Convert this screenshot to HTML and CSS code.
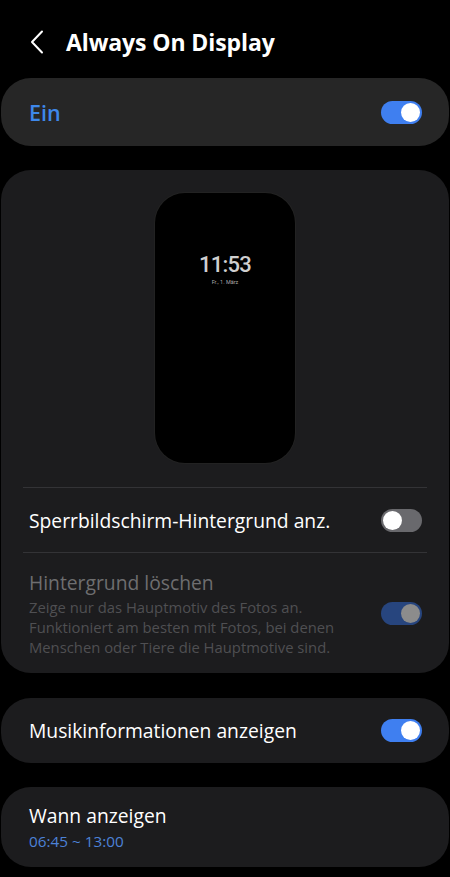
FILE: index.html
```html
<!DOCTYPE html>
<html lang="de">
<head>
<meta charset="utf-8">
<link rel="stylesheet" href="styles.css">
</head>
<body>
<div class="screen">
  <header class="header">
    <svg class="back" width="14" height="24" viewBox="0 0 14 24"><path d="M12 1.5 L2 12 L12 22.5" fill="none" stroke="#fff" stroke-width="2" stroke-linecap="round" stroke-linejoin="round"/></svg>
    <h1 class="title">Always On Display</h1>
  </header>

  <section class="card card-main">
    <span class="main-label">Ein</span>
    <span class="toggle on"><span class="thumb"></span></span>
  </section>

  <section class="card card-preview">
    <div class="preview-wrap">
      <div class="phone">
        <div class="clock">11:53</div>
        <div class="date">Fr., 1. März</div>
      </div>
    </div>
    <div class="divider"></div>
    <div class="row">
      <span class="row-label">Sperrbildschirm-Hintergrund anz.</span>
      <span class="toggle off"><span class="thumb"></span></span>
    </div>
    <div class="divider"></div>
    <div class="row row-disabled">
      <div class="row-text">
        <span class="row-label dim">Hintergrund löschen</span>
        <span class="row-desc">Zeige nur das Hauptmotiv des Fotos an. Funktioniert am besten mit Fotos, bei denen Menschen oder Tiere die Hauptmotive sind.</span>
      </div>
      <span class="toggle disabled"><span class="thumb"></span></span>
    </div>
  </section>

  <section class="card card-row">
    <span class="row-label">Musikinformationen anzeigen</span>
    <span class="toggle on"><span class="thumb"></span></span>
  </section>

  <section class="card card-when">
    <span class="row-label">Wann anzeigen</span>
    <span class="sub-blue">06:45 ~ 13:00</span>
  </section>
</div>
</body>
</html>
```

FILE: styles.css
```css
* { box-sizing: border-box; margin: 0; padding: 0; }
html, body { background: #000; }
body {
  font-family: "Open Sans", Roboto, sans-serif;
  color: #fff;
  width: 450px;
  height: 877px;
  overflow: hidden;
}
.screen {
  display: flex;
  flex-direction: column;
  padding: 0 1px;
}
.screen > * { flex: none; }
.header {
  height: 78px;
  display: flex;
  align-items: center;
  padding: 5px 0 0 29px;
  gap: 22px;
}
.back { display: block; flex: none; }
.title {
  font-size: 23px;
  font-weight: 700;
  letter-spacing: -0.1px;
  color: #fff;
}
.card {
  background: #1c1c1e;
  border-radius: 30px;
}
.card-main {
  background: #262626;
  height: 68px;
  display: flex;
  align-items: center;
  justify-content: space-between;
  padding: 0 27px 0 28px;
  margin-bottom: 24px;
}
.main-label {
  font-size: 21.5px;
  font-weight: 600;
  color: #3e88ea;
}
.toggle {
  position: relative;
  flex: none;
  width: 41px;
  height: 23px;
  border-radius: 12px;
  display: block;
}
.toggle .thumb {
  position: absolute;
  top: 2px;
  width: 19px;
  height: 19px;
  border-radius: 50%;
}
.toggle.on { background: #3f7ff0; }
.toggle.on .thumb { right: 2px; background: #fff; }
.toggle.off { background: #69696d; }
.toggle.off .thumb { left: 2px; background: #fff; }
.toggle.disabled { background: #27457e; }
.toggle.disabled .thumb { right: 2px; background: #8c8c8c; }

.card-preview {
  height: 503px;
  margin-bottom: 25px;
  display: flex;
  flex-direction: column;
}
.card-preview > * { flex: none; }
.preview-wrap {
  display: flex;
  justify-content: center;
  padding: 23px 0 24px 0;
}
.phone {
  width: 140px;
  height: 270px;
  background: #000;
  border-radius: 30px;
  box-shadow: 0 0 0 1px #222;
  display: flex;
  flex-direction: column;
  align-items: center;
  padding-top: 60px;
}
.clock {
  font-family: Roboto, sans-serif;
  font-size: 22px;
  font-weight: 500;
  line-height: 24px;
  color: #cfcfcf;
  letter-spacing: -0.8px;
}
.date {
  font-family: Roboto, sans-serif;
  font-size: 5.5px;
  line-height: 7px;
  color: #aaa;
  margin-top: 2px;
}
.divider {
  height: 1px;
  background: #333336;
  margin: 0 22px;
}
.row {
  display: flex;
  align-items: center;
  justify-content: space-between;
  padding: 0 27px 0 28px;
  height: 64px;
}
.row-label {
  font-size: 19.3px;
  color: #fff;
  font-weight: 400;
  letter-spacing: 0;
}
.row-disabled {
  height: auto;
  padding-top: 17px;
  padding-bottom: 18px;
}
.row-text {
  display: flex;
  flex-direction: column;
  width: 320px;
}
.row-label.dim { color: #6e6e70; line-height: 26px; }
.row-desc {
  font-size: 14.8px;
  line-height: 20px;
  color: #4f4f52;
  margin-top: 1px;
}
.card-row {
  height: 65px;
  display: flex;
  align-items: center;
  justify-content: space-between;
  padding: 0 27px 0 28px;
  margin-bottom: 24px;
}
.card-when {
  height: 80px;
  display: flex;
  flex-direction: column;
  justify-content: center;
  padding: 0 27px 0 28px;
}
.card-when .row-label { line-height: 26px; }
.sub-blue {
  font-size: 15.3px;
  color: #4c82d8;
  line-height: 20px;
  margin-top: 2px;
}
```
